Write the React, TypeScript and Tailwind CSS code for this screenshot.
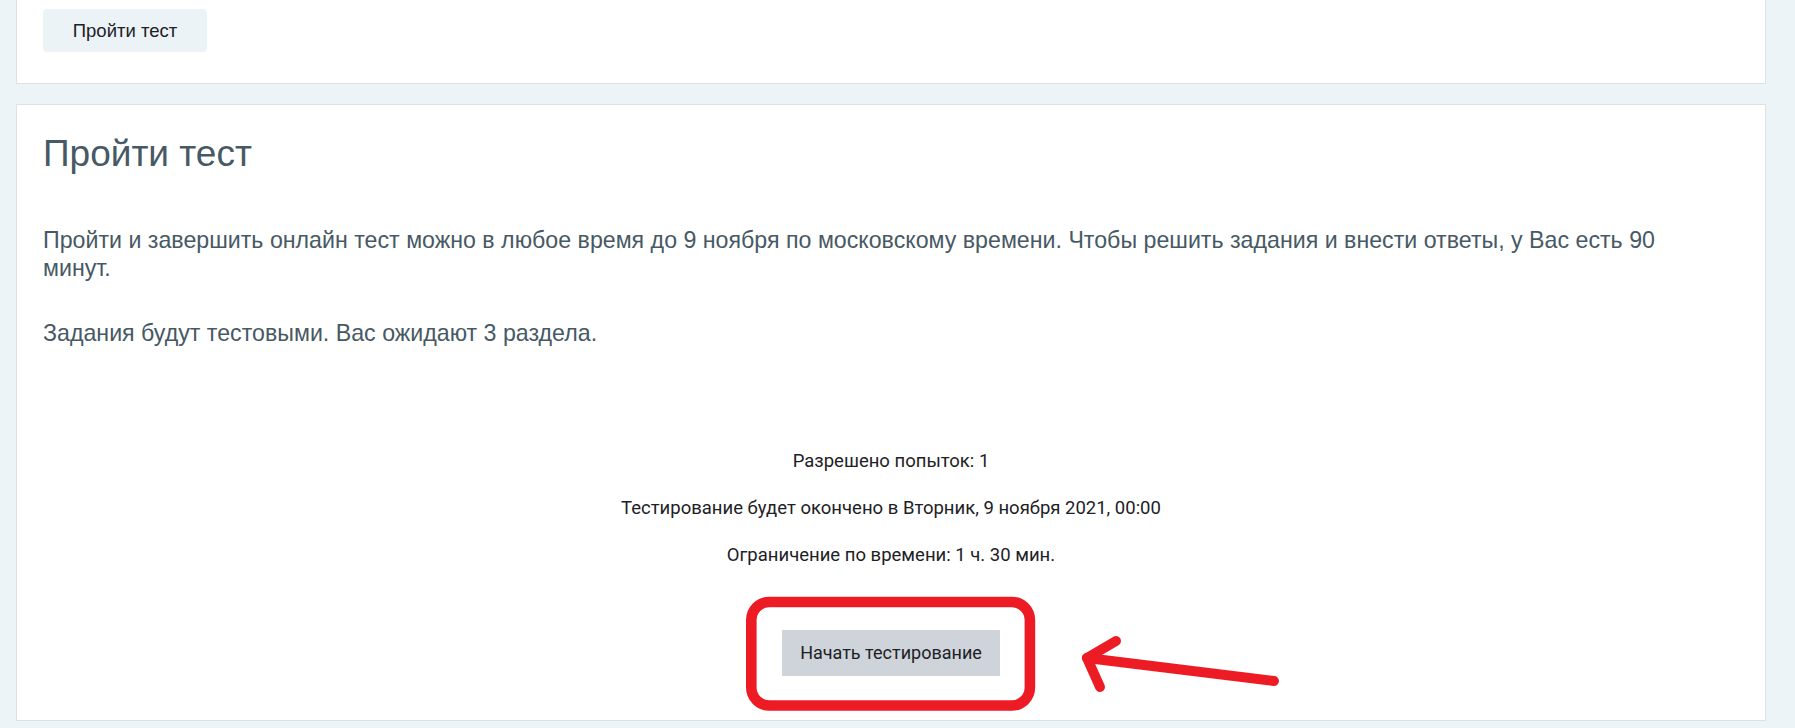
import React from "react";

export default function App() {
  return (
    <div className="relative w-[1795px] h-[728px] overflow-hidden bg-[#ecf4f8] pl-[16px] pr-[29px]" style={{ fontFamily: '"Liberation Sans", Arial, sans-serif' }}>
      <div className="bg-white border-x border-b border-[#dbe1e5] pl-[26px] pt-[9px] pb-[31px]">
        <button className="h-[43px] w-[164px] rounded-[4px] bg-[#ebf3f7] text-[18.5px] text-[#1d2125]">Пройти тест</button>
      </div>
      <div className="mt-[20px] h-[617px] bg-white border border-[#dbe1e5] pl-[26px] pr-[65px] pt-[27px] flex flex-col">
        <h2 className="text-[37px] leading-[44px] text-[#475964] font-normal">Пройти тест</h2>
        <p className="mt-[51px] text-[23.2px] leading-[27.5px] text-[#475964] pr-[10px]">
          Пройти и завершить онлайн тест можно в любое время до 9 ноября по московскому времени. Чтобы решить задания и внести ответы, у Вас есть 90 минут.
        </p>
        <p className="mt-[38px] text-[23.2px] leading-[27.5px] text-[#475964]">Задания будут тестовыми. Вас ожидают 3 раздела.</p>
        <div className="mt-[101px] flex flex-col items-center gap-[23px] text-[18.5px] leading-[24px] text-[#1d2125] pl-[39px]" style={{ fontFamily: 'Roboto, "Liberation Sans", sans-serif' }}>
          <div>Разрешено попыток: 1</div>
          <div>Тестирование будет окончено в Вторник, 9 ноября 2021, 00:00</div>
          <div>Ограничение по времени: 1 ч. 30 мин.</div>
        </div>
        <div className="mt-[63px] flex justify-center pl-[39px]">
          <button className="h-[46px] w-[218px] bg-[#ced4da] text-[18px] text-[#1d2125]" style={{ fontFamily: 'Roboto, "Liberation Sans", sans-serif' }}>Начать тестирование</button>
        </div>
      </div>
      <svg className="absolute left-0 top-0 pointer-events-none" width="1795" height="728" viewBox="0 0 1795 728">
        <rect x="751.3" y="602" width="278.6" height="103.5" rx="18" fill="none" stroke="#ed1c24" strokeWidth="10.6" />
        <path d="M1274 681 L1087 658" fill="none" stroke="#ed1c24" strokeWidth="10" strokeLinecap="round" strokeLinejoin="round" />
        <path d="M1116 641 L1087 658 L1100 687" fill="none" stroke="#ed1c24" strokeWidth="10" strokeLinecap="round" strokeLinejoin="round" />
      </svg>
    </div>
  );
}
